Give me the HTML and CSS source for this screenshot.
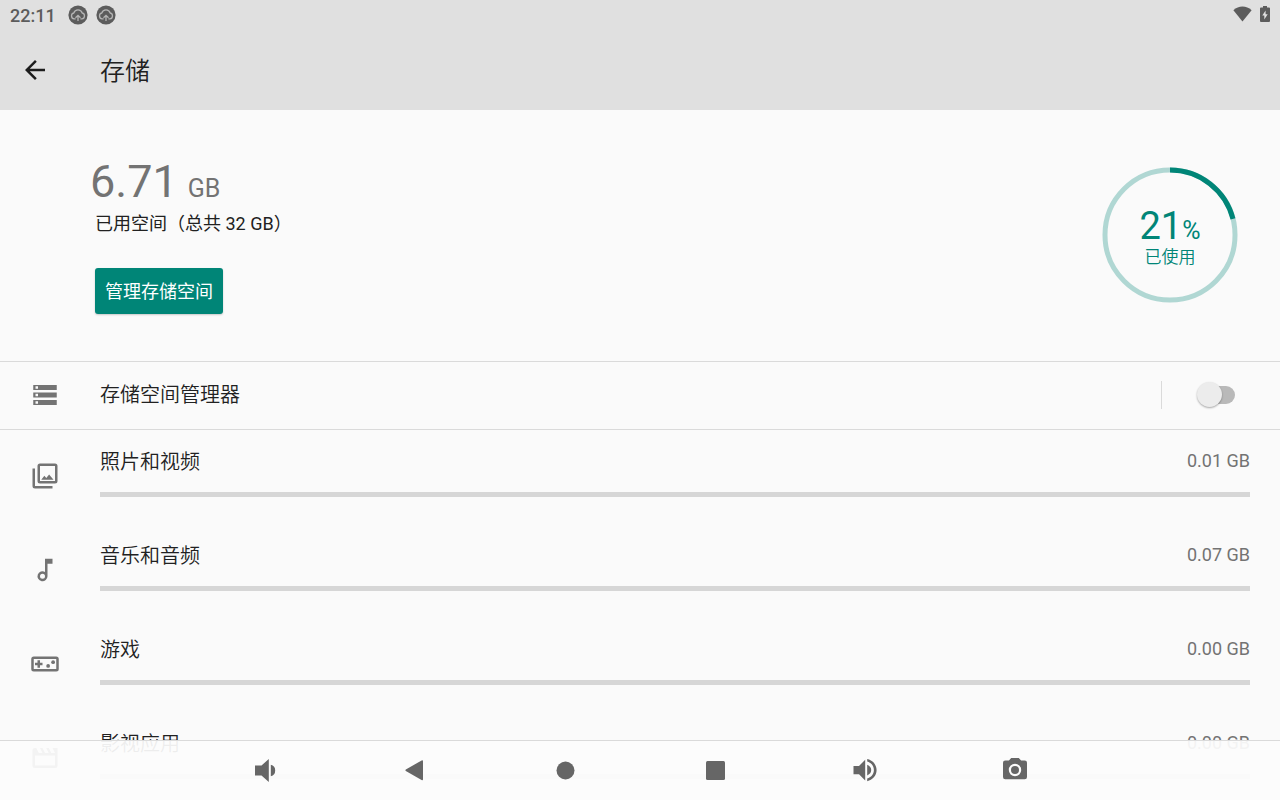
FILE: index.html
```html
<!DOCTYPE html>
<html lang="zh-CN">
<head>
<meta charset="utf-8">
<meta name="viewport" content="width=device-width, initial-scale=1">
<title>存储</title>
<link rel="stylesheet" href="styles.css">
</head>
<body>
<header class="top">
  <div class="status">
    <span class="clock">22:11</span>
    <svg class="notice" viewBox="0 0 20 20" aria-hidden="true"><circle cx="10" cy="10" r="9.6" fill="#5c5c5c"/><path d="M7.600 13.900H6.200a3 3 0 0 1-.4-5.900 4.400 4.400 0 0 1 8.400 0 3 3 0 0 1-.4 5.900h-1.400M10 16V10.500M7.500 12.800 10 10.300 12.500 12.800" fill="none" stroke="#b4b4b4" stroke-width="1.300"/></svg>
    <svg class="notice" viewBox="0 0 20 20" aria-hidden="true"><circle cx="10" cy="10" r="9.6" fill="#5c5c5c"/><path d="M7.600 13.900H6.200a3 3 0 0 1-.4-5.900 4.400 4.400 0 0 1 8.400 0 3 3 0 0 1-.4 5.900h-1.400M10 16V10.500M7.500 12.800 10 10.300 12.500 12.800" fill="none" stroke="#b4b4b4" stroke-width="1.300"/></svg>
    <span class="status-right">
      <svg class="wifi" viewBox="0 0 20 16" aria-hidden="true"><path d="M10 16 .4 4.100C3.200 1.600 6.500.2 10 .2s6.800 1.400 9.600 3.900z"/></svg>
      <svg class="battery" viewBox="0 0 10 16" aria-hidden="true"><path fill-rule="evenodd" d="M3 0h4v1.600h2q1 0 1 1V15q0 1-1 1H1q-1 0-1-1V2.600q0-1 1-1h2zM5.600 4.400 2.300 9.600h2v3.800l3.400-5.200H5.600z"/></svg>
    </span>
  </div>
  <div class="appbar">
    <button class="back" type="button" aria-label="返回"><svg class="icon" viewBox="0 0 24 24" aria-hidden="true"><path d="M20 11H7.830l5.590-5.590L12 4l-8 8 8 8 1.410-1.410L7.830 13H20z"/></svg></button>
    <h1 class="title">存储</h1>
  </div>
</header>
<main class="content">
  <section class="summary">
    <div class="usage">
      <p class="used"><span class="used-number">6.71</span><span class="used-unit">GB</span></p>
      <p class="total">已用空间（总共 32 GB）</p>
      <button class="manage" type="button">管理存储空间</button>
    </div>
    <div class="donut">
      <svg class="ring" viewBox="0 0 136 136" aria-hidden="true">
        <circle cx="68" cy="68" r="65" fill="none" stroke="#b0d7d3" stroke-width="5"/>
        <circle cx="68" cy="68" r="65" fill="none" stroke="#008577" stroke-width="5" pathLength="100" stroke-dasharray="21 79" transform="rotate(-90 68 68)"/>
      </svg>
      <div class="donut-label">
        <p class="percent">21<span class="percent-sign">%</span></p>
        <p class="percent-text">已使用</p>
      </div>
    </div>
  </section>
  <section class="manager">
    <svg class="icon" viewBox="0 0 24 24" aria-hidden="true"><path fill-rule="evenodd" d="M2.600 20h18.800v-4H2.600zm1.800-3h2v2h-2zM2.600 4v4h18.800V4zm3.800 3h-2V5h2zm-3.800 7h18.800v-4H2.600zm1.800-3h2v2h-2z"/></svg>
    <label class="name" for="manager-switch">存储空间管理器</label>
    <span class="divider"></span>
    <input class="switch" id="manager-switch" type="checkbox" role="switch">
  </section>
  <ul class="list">
    <li class="item">
      <svg class="icon" viewBox="0 0 24 24" aria-hidden="true"><path fill-rule="evenodd" d="M8 2h12a2 2 0 0 1 2 2v12a2 2 0 0 1-2 2H8a2 2 0 0 1-2-2V4a2 2 0 0 1 2-2zm0 2v12h12V4zM2 6h2v14h14v2H4a2 2 0 0 1-2-2zM11.500 11.700l1.500 1.900 2.300-2.900 3.500 4.300H9z"/></svg>
      <div class="detail">
        <div class="line"><span class="name" id="n1">照片和视频</span><span class="size">0.01 GB</span></div>
        <progress class="bar" value="0" max="32" aria-labelledby="n1"></progress>
      </div>
    </li>
    <li class="item">
      <svg class="icon" viewBox="0 0 24 24" aria-hidden="true"><path fill-rule="evenodd" d="M12 3v10.550A4 4 0 1 0 14 17V7h4V3zM10 19a2 2 0 1 1 0-4 2 2 0 0 1 0 4z"/></svg>
      <div class="detail">
        <div class="line"><span class="name" id="n2">音乐和音频</span><span class="size">0.07 GB</span></div>
        <progress class="bar" value="0" max="32" aria-labelledby="n2"></progress>
      </div>
    </li>
    <li class="item">
      <svg class="icon" viewBox="0 0 24 24" aria-hidden="true"><path fill-rule="evenodd" d="M21 6H3a2 2 0 0 0-2 2v8a2 2 0 0 0 2 2h18a2 2 0 0 0 2-2V8a2 2 0 0 0-2-2zm0 10H3V8h18zM6 15h2v-2h2v-2H8V9H6v2H4v2h2z"/><circle cx="14.500" cy="13.500" r="1.500"/><circle cx="18.500" cy="10.500" r="1.500"/></svg>
      <div class="detail">
        <div class="line"><span class="name" id="n3">游戏</span><span class="size">0.00 GB</span></div>
        <progress class="bar" value="0" max="32" aria-labelledby="n3"></progress>
      </div>
    </li>
    <li class="item">
      <svg class="icon" viewBox="0 0 24 24" aria-hidden="true"><path fill-rule="evenodd" d="M18 4l2 4h-3l-2-4h-2l2 4h-3l-2-4H8l2 4H7L5 4H4a2 2 0 0 0-2 2v12a2 2 0 0 0 2 2h16a2 2 0 0 0 2-2V4zM4 10h16v8H4z"/></svg>
      <div class="detail">
        <div class="line"><span class="name" id="n4">影视应用</span><span class="size">0.00 GB</span></div>
        <progress class="bar" value="0" max="32" aria-labelledby="n4"></progress>
      </div>
    </li>
  </ul>
</main>
<nav class="navbar" aria-label="系统导航">
  <button class="key" type="button" aria-label="降低音量"><svg class="icon" viewBox="0 0 30 30" aria-hidden="true"><path d="M5 10.500h6.500L18.800 4v23L11.500 20.500H5zM20.800 9.800q4.400 1 4.400 5.700t-4.400 5.700z"/></svg></button>
  <button class="key" type="button" aria-label="返回"><svg class="icon" viewBox="0 0 30 30" aria-hidden="true"><path d="M5.800 14.600 21.600 5.400q1.400-.6 1.400.8v18q0 1.400-1.400.8L5.800 16q-1-.7 0-1.400z"/></svg></button>
  <button class="key" type="button" aria-label="主屏幕"><svg class="icon" viewBox="0 0 30 30" aria-hidden="true"><circle cx="15.500" cy="15.500" r="9"/></svg></button>
  <button class="key" type="button" aria-label="最近任务"><svg class="icon" viewBox="0 0 30 30" aria-hidden="true"><rect x="6" y="6" width="19" height="19" rx="1.500"/></svg></button>
  <button class="key" type="button" aria-label="提高音量"><svg class="icon" viewBox="0 0 30 30" aria-hidden="true"><path d="M3.500 11H9l6.200-6.200v20.600L9 19.300H3.500zM17.200 9.800q4 1.600 4 5.300t-4 5.300zM17.200 4c5.300 1.200 9.400 5.400 9.400 11.100S22.500 25 17.200 26.200v-2.600c3.800-1.100 6.700-4.300 6.700-8.500s-2.900-7.400-6.700-8.500z"/></svg></button>
  <button class="key" type="button" aria-label="截屏"><svg class="icon" viewBox="0 0 30 30" aria-hidden="true"><path fill-rule="evenodd" d="M11.200 3h7.600l2.300 2.500h3.700Q27 5.500 27 7.800V22q0 2.300-2.200 2.300H5.200Q3 24.300 3 22V7.800q0-2.300 2.200-2.300h3.700zM15 8.800a6.200 6.200 0 1 0 0 12.400 6.200 6.200 0 0 0 0-12.400z"/><circle cx="15" cy="15" r="4"/></svg></button>
</nav>
</body>
</html>
```
FILE: styles.css
```css
* {
  box-sizing: border-box;
}

body {
  margin: 0;
  height: 100vh;
  overflow: hidden;
  display: flex;
  flex-direction: column;
  background: #fafafa;
  color: #212121;
  font-family: Roboto, "Noto Sans CJK SC", sans-serif;
  font-weight: 400;
}

h1, p, ul {
  margin: 0;
  padding: 0;
  font-weight: inherit;
}

button {
  border: 0;
  padding: 0;
  background: none;
  font: inherit;
  color: inherit;
}

.icon {
  display: block;
  flex: none;
  width: 30px;
  height: 30px;
  fill: currentColor;
}

/* Status bar and title */
.top {
  flex: none;
  background: #e0e0e0;
}

.status {
  display: flex;
  align-items: center;
  gap: 8px;
  height: 30px;
  padding: 0 10px;
  color: #5c5c5c;
}

.clock {
  margin-right: 4px;
  font-size: 18px;
  font-weight: 500;
}

.notice {
  width: 20px;
  height: 20px;
}

.status-right {
  display: flex;
  align-items: center;
  gap: 8px;
  margin-left: auto;
  padding-bottom: 2px;
  fill: #5c5c5c;
}

.wifi {
  width: 19px;
  height: 16px;
}

.battery {
  width: 10px;
  height: 16px;
}

.appbar {
  display: flex;
  align-items: center;
  gap: 50px;
  height: 80px;
  padding: 0 20px;
}

.back {
  color: #1c1c1c;
}

.title {
  padding-top: 3px;
  font-size: 25px;
  font-weight: 350;
  line-height: 40px;
}

/* Storage summary */
.content {
  flex: 1;
  min-height: 0;
  overflow: hidden;
}

.summary {
  display: flex;
  justify-content: space-between;
  align-items: center;
  height: 252px;
  padding: 0 42px 2px 95px;
  border-bottom: 1px solid #dadada;
}

.usage {
  padding-top: 2px;
}

.used {
  display: flex;
  align-items: baseline;
  gap: 10px;
  margin-bottom: 3px;
  margin-left: -5px;
  color: #737373;
}

.used-number {
  font-size: 45px;
  line-height: 50px;
}

.used-unit {
  font-size: 25px;
  line-height: 25px;
}

.total {
  font-size: 18px;
  line-height: 28px;
}

.manage {
  display: block;
  margin-top: 30px;
  height: 46px;
  padding: 0 10px 2px;
  border-radius: 3px;
  background: #008577;
  box-shadow: 0 1px 2px #00000033;
  color: #fff;
  font-size: 18px;
}

.donut {
  display: grid;
  place-items: center;
  color: #008577;
  text-align: center;
}

.ring {
  grid-area: 1 / 1;
  width: 136px;
  height: 136px;
}

.donut-label {
  grid-area: 1 / 1;
  padding-top: 10px;
}

.percent {
  font-size: 38px;
  line-height: 30px;
}

.percent-sign {
  font-size: 25px;
}

.percent-text {
  font-size: 17px;
  font-weight: 350;
  line-height: 22px;
}

/* Storage manager row */
.manager {
  display: flex;
  align-items: center;
  height: 68px;
  padding: 0 45px 2px 30px;
  border-bottom: 1px solid #dadada;
}

.manager .icon,
.item .icon {
  color: #737373;
}

.name {
  font-size: 20px;
  font-weight: 350;
  line-height: 32px;
}

.manager .name {
  flex: 1;
  margin-left: 40px;
}

.divider {
  width: 1px;
  height: 28px;
  margin-right: 35px;
  background: #dadada;
}

.switch {
  appearance: none;
  display: flex;
  align-items: center;
  width: 38px;
  height: 18px;
  margin: 0;
  border-radius: 9px;
  background: linear-gradient(to right, transparent 12px, #b9b9b9 12px);
}

.switch::before {
  content: "";
  width: 25px;
  height: 25px;
  border-radius: 50%;
  background: #ececec;
  box-shadow: 0 1px 2px #00000055;
}

.switch:checked {
  justify-content: flex-end;
  background: #80c2bb;
}

/* Categories */
.list {
  list-style: none;
}

.item {
  display: flex;
  align-items: center;
  gap: 40px;
  height: 94px;
  padding: 0 30px 2px;
}

.detail {
  flex: 1;
  display: grid;
  gap: 14px;
  padding-bottom: 10px;
}

.line {
  display: flex;
  justify-content: space-between;
  align-items: flex-start;
}

.size {
  color: #737373;
  font-size: 18px;
  line-height: 30px;
}

.bar {
  appearance: none;
  display: block;
  width: 100%;
  height: 5px;
  border: 0;
  background: #d6d6d6;
}

.bar::-webkit-progress-bar {
  background: #d6d6d6;
}

.bar::-webkit-progress-value {
  background: #008577;
}

/* System keys, laid over the scrolling content */
.navbar {
  position: fixed;
  inset: auto 0 0;
  display: flex;
  justify-content: center;
  gap: 120px;
  height: 60px;
  padding-bottom: 2px;
  border-top: 1px solid #dadada;
  background: #fcfcfcee;
  color: #666;
}

.key {
  display: grid;
  place-items: center;
}
```
